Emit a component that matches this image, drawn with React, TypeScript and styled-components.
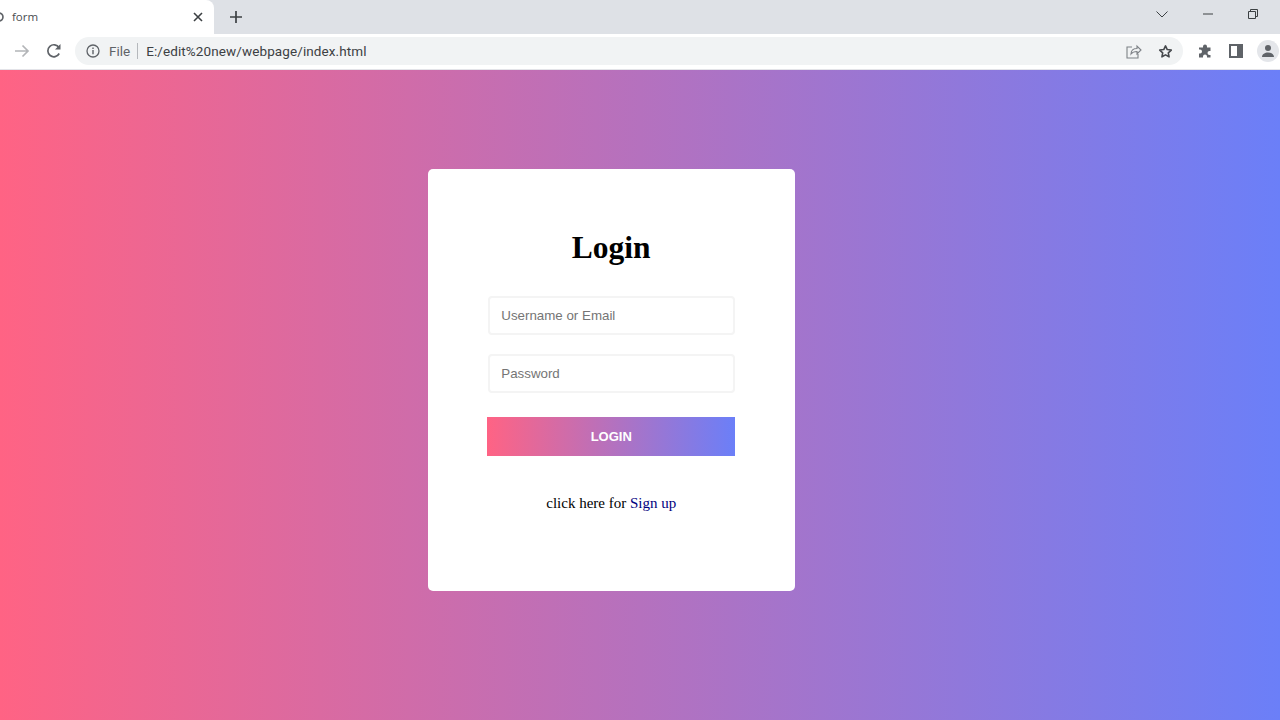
import React from 'react'
import styled, { createGlobalStyle } from 'styled-components'

const GlobalStyle = createGlobalStyle`
  html, body {
    margin: 0;
    padding: 0;
    height: 100%;
    overflow: hidden;
  }
  #root {
    height: 100%;
  }
`

const Screen = styled.div`
  width: 1280px;
  height: 720px;
  display: flex;
  flex-direction: column;
  overflow: hidden;
  font-family: Roboto, 'Liberation Sans', sans-serif;
`

const TabStrip = styled.div`
  height: 34px;
  flex: none;
  background: #dee1e6;
  display: flex;
  align-items: stretch;
`

const Tab = styled.div`
  width: 214px;
  background: #fff;
  border-top-right-radius: 8px;
  display: flex;
  align-items: center;
  color: #4a4d51;
  font-family: 'Open Sans', sans-serif;
  font-size: 11.5px;
  padding-bottom: 1px;
  box-sizing: border-box;
`

const Favicon = styled.svg`
  width: 10px;
  height: 10px;
  margin-left: -6px;
  margin-right: 8px;
  flex: none;
`

const TabTitle = styled.span`
  flex: 1;
`

const TabClose = styled.svg`
  width: 10px;
  height: 10px;
  margin-right: 11px;
  flex: none;
`

const NewTab = styled.svg`
  width: 14px;
  height: 14px;
  margin-left: 15px;
  align-self: center;
  flex: none;
`

const WindowControls = styled.div`
  margin-left: auto;
  display: flex;
  align-items: center;
  padding: 0 22px 6px 0;
  gap: 35px;
`

const Toolbar = styled.div`
  height: 34px;
  padding-bottom: 1px;
  flex: none;
  background: #fff;
  display: flex;
  align-items: center;
  border-bottom: 1px solid #e3e3e8;
`

const NavIcon = styled.svg<{ $left: number }>`
  flex: none;
  margin-left: ${(p) => p.$left}px;
`

const Omnibox = styled.div`
  width: 1108px;
  height: 28px;
  margin-left: 13px;
  flex: none;
  box-sizing: border-box;
  padding: 0 10px 0 11px;
  border-radius: 14px;
  background: #f1f3f4;
  display: flex;
  align-items: center;
  font-size: 13.5px;
`

const FileLabel = styled.span`
  color: #5f6368;
  margin-left: 9px;
`

const Separator = styled.span`
  width: 1px;
  height: 16px;
  background: #b5b8bc;
  margin: 0 8px 0 7px;
`

const Url = styled.span`
  color: #3c4043;
  letter-spacing: 0.1px;
`

const OmniActions = styled.div`
  margin-left: auto;
  display: flex;
  align-items: center;
  gap: 16px;
`

const Avatar = styled.div`
  width: 22px;
  height: 22px;
  margin-left: 14px;
  flex: none;
  border-radius: 50%;
  background: #e4e6ea;
  display: flex;
  align-items: center;
  justify-content: center;
`

const Page = styled.main`
  flex: 1;
  background: linear-gradient(to right, #ff6384, #6b7ff8);
  padding: 99px 0 0 428px;
  box-sizing: border-box;
`

const Card = styled.section`
  width: 366.5px;
  height: 422px;
  box-sizing: border-box;
  padding-top: 60px;
  background: #fff;
  border-radius: 5px;
  display: flex;
  flex-direction: column;
  align-items: center;
`

const Title = styled.h1`
  margin: 0 0 29px;
  height: 38px;
  line-height: 38px;
  font-family: 'Liberation Serif', serif;
  font-size: 31.5px;
  font-weight: bold;
  color: #000;
`

const Field = styled.input`
  width: 247px;
  height: 39px;
  box-sizing: border-box;
  margin: 0 0 19px 1px;
  padding: 0 11px;
  border: 2px solid #f4f4f4;
  border-radius: 4px;
  outline: none;
  background: #fff;
  font-family: 'Liberation Sans', sans-serif;
  font-size: 13.33px;

  &::placeholder {
    color: #757575;
    opacity: 1;
  }
`

const LoginButton = styled.button`
  width: 248px;
  height: 39px;
  margin-top: 5px;
  border: 0;
  padding: 0;
  background: linear-gradient(to right, #ff6384, #6b7ff8);
  color: #fff;
  font-family: 'Liberation Sans', sans-serif;
  font-size: 13px;
  font-weight: bold;
`

const SignupLine = styled.p`
  margin: 37px 0 0;
  font-family: 'Liberation Serif', serif;
  font-size: 15px;
  line-height: 20px;
  color: #000;
`

const SignupLink = styled.a`
  color: #000080;
  text-decoration: none;
`

export default function App() {
  return (
    <Screen>
      <GlobalStyle />
      <TabStrip>
        <Tab>
          <Favicon viewBox="0 0 10 10">
            <circle cx="5" cy="5" r="4" fill="none" stroke="#5f6368" strokeWidth="1.6" />
          </Favicon>
          <TabTitle>form</TabTitle>
          <TabClose viewBox="0 0 10 10">
            <path d="M1 1l8 8M9 1L1 9" stroke="#3c4043" strokeWidth="1.6" />
          </TabClose>
        </Tab>
        <NewTab viewBox="0 0 14 14">
          <path d="M7 1v12M1 7h12" stroke="#3c4043" strokeWidth="1.7" />
        </NewTab>
        <WindowControls>
          <svg width="12" height="7" viewBox="0 0 12 7">
            <path d="M.5.5L6 6l5.500-5.500" fill="none" stroke="#3c4043" strokeWidth="1" />
          </svg>
          <svg width="10" height="2" viewBox="0 0 10 2">
            <path d="M0 1h10" stroke="#3c4043" strokeWidth="1" />
          </svg>
          <svg width="10" height="10" viewBox="0 0 10 10">
            <path
              d="M.5 2.500h7v7h-7zM2.500 2.500v-2h7v7h-2"
              fill="none"
              stroke="#3c4043"
              strokeWidth="1"
            />
          </svg>
        </WindowControls>
      </TabStrip>
      <Toolbar>
        <NavIcon $left={14} width="16" height="14" viewBox="0 0 16 14">
          <path d="M1 7h13M8.500 1.500L14 7l-5.500 5.500" fill="none" stroke="#b3b5b8" strokeWidth="1.7" />
        </NavIcon>
        <NavIcon $left={16} width="16" height="16" viewBox="0 0 16 16">
          <path
            d="M13.200 10.500A6 6 0 1 1 13 4.700"
            fill="none"
            stroke="#5f6368"
            strokeWidth="1.7"
          />
          <path d="M14.500 1v5.500H9z" fill="#5f6368" />
        </NavIcon>
        <Omnibox>
          <svg width="14" height="14" viewBox="0 0 14 14">
            <circle cx="7" cy="7" r="6" fill="none" stroke="#5f6368" strokeWidth="1.3" />
            <path d="M7 6v4.200M7 3.500v1.400" stroke="#5f6368" strokeWidth="1.400" />
          </svg>
          <FileLabel>File</FileLabel>
          <Separator />
          <Url>E:/edit%20new/webpage/index.html</Url>
          <OmniActions>
            <svg width="16" height="15" viewBox="0 0 16 15">
              <path
                d="M6 3H1v11h11v-4M5 10c0-4 3-5.500 6-5.500V2l4 4-4 4V7.500C8.500 7.500 6.500 8 5 10z"
                fill="none"
                stroke="#7d8186"
                strokeWidth="1.1"
              />
            </svg>
            <svg width="15" height="15" viewBox="0 0 24 24">
              <path
                d="M12 3l2.800 5.900 6.400.8-4.700 4.400 1.200 6.400L12 17.400l-5.700 3.100 1.200-6.400-4.700-4.400 6.400-.8z"
                fill="none"
                stroke="#45484c"
                strokeWidth="2.6"
                strokeLinejoin="round"
              />
            </svg>
          </OmniActions>
        </Omnibox>
        <NavIcon $left={15} width="14" height="14" viewBox="0 0 14 14">
          <path
            d="M5 2.500a2 2 0 0 1 4 0V3.500h3.500V7h-1a2 2 0 0 0 0 4h1v2.500H9v-1a2 2 0 0 0-4 0v1H1V9.500h1a2 2 0 0 0 0-4H1V3.500h4z"
            fill="#5f6368"
          />
        </NavIcon>
        <NavIcon $left={17} width="14" height="14" viewBox="0 0 14 14">
          <rect x="1" y="1" width="12" height="12" fill="none" stroke="#5f6368" strokeWidth="2" />
          <rect x="8" y="1" width="5" height="12" fill="#5f6368" />
        </NavIcon>
        <Avatar>
          <svg width="14" height="14" viewBox="0 0 14 14">
            <circle cx="7" cy="4" r="3" fill="#5f6368" />
            <path d="M1 13c0-3 3-4.500 6-4.500S13 10 13 13z" fill="#5f6368" />
          </svg>
        </Avatar>
      </Toolbar>
      <Page>
        <Card>
          <Title>Login</Title>
          <Field type="text" placeholder="Username or Email" />
          <Field type="password" placeholder="Password" />
          <LoginButton type="button">LOGIN</LoginButton>
          <SignupLine>
            click here for <SignupLink href="#">Sign up</SignupLink>
          </SignupLine>
        </Card>
      </Page>
    </Screen>
  )
}
